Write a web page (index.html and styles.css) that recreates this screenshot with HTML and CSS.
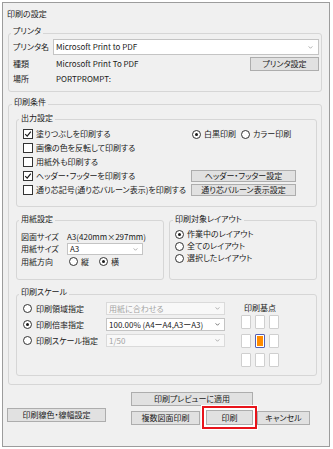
FILE: index.html
```html
<!DOCTYPE html>
<html lang="ja">
  <head>
    <meta charset="UTF-8" />
    <meta name="viewport" content="width=device-width, initial-scale=1.0" />
    <title>印刷の設定</title>
    <link rel="stylesheet" href="styles.css">
  </head>
  <body>
    <div class="window">
      <div class="title">印刷の設定</div>

      <!-- プリンタ -->
      <div class="group printer">
        <div class="group-title">プリンタ</div>
        <div class="printer-row first">
          <span>プリンタ名</span>
          <div class="combo">
            <span>Microsoft Print to PDF</span>
            <svg class="chev" viewBox="0 0 6 4"><path d="M0.5 0.5L3 3L5.5 0.5" /></svg>
          </div>
        </div>
        <div class="printer-row mid">
          <span>種類</span>
          <span class="value">Microsoft Print To PDF</span>
          <button class="btn">プリンタ設定</button>
        </div>
        <div class="printer-row last">
          <span>場所</span>
          <span class="value">PORTPROMPT:</span>
        </div>
      </div>

      <!-- 印刷条件 -->
      <div class="group conditions">
        <div class="group-title">印刷条件</div>

        <div class="group inner output">
          <div class="group-title">出力設定</div>
          <div class="output-grid">
            <label class="check"><span class="box"><svg viewBox="0 0 8 8"><path d="M1.2 4.2L3.2 6.2L6.8 1.6" /></svg></span>塗りつぶしを印刷する</label>
            <div class="radio-line">
              <label class="radio"><span class="dot on"></span>白黒印刷</label>
              <label class="radio"><span class="dot"></span>カラー印刷</label>
            </div>
            <label class="check"><span class="box"></span>画像の色を反転して印刷する</label>
            <span></span>
            <label class="check"><span class="box"></span>用紙外も印刷する</label>
            <span></span>
            <label class="check"><span class="box"><svg viewBox="0 0 8 8"><path d="M1.2 4.2L3.2 6.2L6.8 1.6" /></svg></span>ヘッダー・フッターを印刷する</label>
            <button class="btn small">ヘッダー・フッター設定</button>
            <label class="check"><span class="box"></span>通り芯記号(通り芯バルーン表示)を印刷する</label>
            <button class="btn small">通り芯バルーン表示設定</button>
          </div>
        </div>

        <div class="split">
          <div class="group inner paper">
            <div class="group-title">用紙設定</div>
            <div class="paper-grid">
              <span>図面サイズ</span>
              <span>A3(420mm×297mm)</span>
              <span>用紙サイズ</span>
              <div class="combo">
                <span>A3</span>
                <svg class="chev" viewBox="0 0 6 4"><path d="M0.5 0.5L3 3L5.5 0.5" /></svg>
              </div>
              <span>用紙方向</span>
              <div class="radio-line">
                <label class="radio"><span class="dot"></span>縦</label>
                <label class="radio"><span class="dot on"></span>横</label>
              </div>
            </div>
          </div>

          <div class="group inner layout">
            <div class="group-title">印刷対象レイアウト</div>
            <div class="layout-list">
              <label class="radio"><span class="dot on"></span>作業中のレイアウト</label>
              <label class="radio"><span class="dot"></span>全てのレイアウト</label>
              <label class="radio"><span class="dot"></span>選択したレイアウト</label>
            </div>
          </div>
        </div>

        <div class="group inner scale">
          <div class="group-title">印刷スケール</div>
          <div class="scale-body">
            <div class="scale-grid">
              <label class="radio"><span class="dot"></span>印刷領域指定</label>
              <div class="combo disabled">
                <span>用紙に合わせる</span>
                <svg class="chev" viewBox="0 0 6 4"><path d="M0.5 0.5L3 3L5.5 0.5" /></svg>
              </div>
              <label class="radio"><span class="dot on"></span>印刷倍率指定</label>
              <div class="combo">
                <span>100.00% (A4ーA4,A3ーA3)</span>
                <svg class="chev dark" viewBox="0 0 6 4"><path d="M0.5 0.5L3 3L5.5 0.5" /></svg>
              </div>
              <label class="radio"><span class="dot"></span>印刷スケール指定</label>
              <div class="combo disabled">
                <span>1/50</span>
                <svg class="chev" viewBox="0 0 6 4"><path d="M0.5 0.5L3 3L5.5 0.5" /></svg>
              </div>
            </div>

            <div class="origin">
              <div class="origin-title">印刷基点</div>
              <div class="origin-grid">
                <span class="cell"></span>
                <span class="cell"></span>
                <span class="cell"></span>
                <span class="cell"></span>
                <span class="cell on"></span>
                <span class="cell"></span>
                <span class="cell"></span>
                <span class="cell"></span>
                <span class="cell"></span>
              </div>
            </div>
          </div>
        </div>
      </div>

      <!-- ボタン -->
      <div class="footer">
        <button class="btn line-btn">印刷線色・線幅設定</button>
        <div class="footer-right">
          <button class="btn preview">印刷プレビューに適用</button>
          <div class="action-row">
            <button class="btn multi">複数図面印刷</button>
            <div class="print-mark"><button class="btn">印刷</button></div>
            <button class="btn cancel">キャンセル</button>
          </div>
        </div>
      </div>
    </div>
  </body>
</html>
```

FILE: styles.css
```css
/* 基本 */
* {
  box-sizing: border-box;
}

body {
  margin: 0;
  background: #fff;
  font-family: "Noto Sans CJK JP", "Liberation Sans", sans-serif;
  font-size: 8px;
  line-height: 12px;
  color: #1a1a1a;
  font-feature-settings: "palt";
}

.window {
  width: 328px;
  height: 445px;
  margin: 2px;
  padding: 0 7px 0 5px;
  border: 1px solid #9c9c9c;
  background: #f0f0f0;
}

.title {
  padding-top: 5px;
  margin-left: -1px;
}

/* グループ枠 */
.group {
  border: 1px solid #d6d6d6;
  border-radius: 3px;
}

.group-title {
  width: fit-content;
  margin: -9px 0 0 -2px;
  padding: 0 2px;
  background: #f0f0f0;
}

/* ボタン・コンボ */
.btn {
  display: block;
  height: 14px;
  padding: 0;
  border: 1px solid #adadad;
  background: #e1e1e1;
  font: inherit;
  color: inherit;
  line-height: 12px;
  text-align: center;
  white-space: nowrap;
}

.btn.small {
  height: 12px;
  line-height: 10px;
}

.combo {
  display: flex;
  align-items: center;
  justify-content: space-between;
  height: 12px;
  padding: 0 4px 0 2px;
  border: 1px solid #c4c4c4;
  background: #fff;
  white-space: nowrap;
}

.combo.disabled {
  background: #f8f8f8;
  border-color: #dadada;
  color: #a4a4a4;
}

.chev {
  width: 5px;
  height: 3px;
  fill: none;
  stroke: #8a8a8a;
  stroke-width: 0.9;
}

.chev.dark {
  stroke: #333;
}

/* チェックボックス・ラジオ */
.check,
.radio {
  display: flex;
  align-items: center;
  gap: 3px;
  white-space: nowrap;
}

.box {
  display: flex;
  align-items: center;
  justify-content: center;
  width: 10px;
  height: 10px;
  border: 1px solid #333;
  background: #fff;
}

.box svg {
  width: 8px;
  height: 8px;
  fill: none;
  stroke: #1a1a1a;
  stroke-width: 1.2;
}

.dot {
  display: flex;
  align-items: center;
  justify-content: center;
  width: 9px;
  height: 9px;
  border: 1px solid #333;
  border-radius: 50%;
  background: #fff;
}

.dot.on::after {
  content: "";
  width: 3px;
  height: 3px;
  border-radius: 50%;
  background: #1a1a1a;
}

.radio-line {
  display: flex;
  gap: 5px;
}

/* プリンタ */
.printer {
  margin-top: 13px;
  padding: 0 2px 5px 4px;
}

.printer-row {
  display: grid;
  grid-template-columns: 40px 1fr 69px;
  align-items: center;
}

.printer-row.first {
  grid-template-columns: 40px 1fr;
  height: 16px;
  margin-top: 2px;
}

.printer-row.first .combo {
  height: 16px;
  padding-right: 5px;
}

.printer-row.mid {
  height: 16px;
  margin-top: 1px;
}

.printer-row.last {
  height: 14px;
}

.printer-row .value {
  padding-left: 3px;
}

/* 印刷条件 */
.conditions {
  margin-top: 12px;
  padding: 0 4px 8px 7px;
}

.conditions > .group-title {
  margin-left: -4px;
}

.inner > .group-title {
  margin-top: -8px;
}

.output {
  margin-top: 11px;
  padding: 0 0 9px 6px;
}

.output > .group-title {
  margin-left: -4px;
}

.output-grid {
  display: grid;
  grid-template-columns: 168px 105px;
  grid-auto-rows: 14px;
  align-items: center;
  margin-top: 3px;
}

.output-grid .radio-line {
  padding-left: 1px;
}

.split {
  display: grid;
  grid-template-columns: 1fr 1fr;
  column-gap: 5px;
  margin-top: 13px;
}

.paper {
  padding: 0 0 11px 4px;
}

.paper-grid {
  display: grid;
  grid-template-columns: 46px 76px;
  grid-template-rows: 12px 12px 13px;
  align-items: center;
  margin-top: 6px;
}

.paper-grid .radio-line {
  gap: 10px;
  padding-left: 2px;
}

.layout {
  padding-left: 5px;
}

.layout-list {
  display: grid;
  grid-auto-rows: 12px;
  align-items: center;
  margin-top: 3px;
}

/* 印刷スケール */
.scale {
  margin-top: 14px;
  padding: 0 0 8px 6px;
}

.scale > .group-title {
  margin-top: -9px;
  margin-left: -4px;
}

.scale-body {
  display: flex;
  align-items: flex-start;
  margin-top: 4px;
}

.scale-grid {
  display: grid;
  grid-template-columns: 83px 119px;
  grid-auto-rows: 13px;
  row-gap: 3px;
  align-items: center;
}

.scale-grid .radio {
  gap: 4px;
}

.scale-grid .combo {
  height: 13px;
}

.origin {
  width: 38px;
  margin-left: 16px;
}

.origin-title {
  text-align: center;
  white-space: nowrap;
}

.origin-grid {
  display: grid;
  grid-template-columns: repeat(3, 10px);
  grid-auto-rows: 14px;
  gap: 5px 4px;
  margin-top: 1px;
}

.cell {
  border: 1px solid #cfcfcf;
  border-radius: 1px;
  background: #fff;
}

.cell.on {
  padding: 1px;
  border-color: #5561b4;
}

.cell.on::after {
  content: "";
  display: block;
  height: 100%;
  background: #ff8c00;
}

/* 下部ボタン */
.footer {
  display: flex;
  align-items: flex-start;
  margin-top: 7px;
}

.line-btn {
  width: 99px;
  margin: 16px 0 0 -1px;
}

.footer-right {
  margin-left: 25px;
}

.preview {
  width: 122px;
}

.action-row {
  display: flex;
  align-items: center;
  margin-top: 4px;
}

.multi {
  width: 69px;
}

.print-mark {
  margin: -4px 0 -4px 2px;
  padding: 2px;
  border: 2px solid #e8141b;
  background: #fff;
  box-shadow: 0 0 0 1px #fff;
}

.print-mark .btn {
  width: 47px;
  height: 15px;
  line-height: 13px;
}

.cancel {
  width: 53px;
}
```
